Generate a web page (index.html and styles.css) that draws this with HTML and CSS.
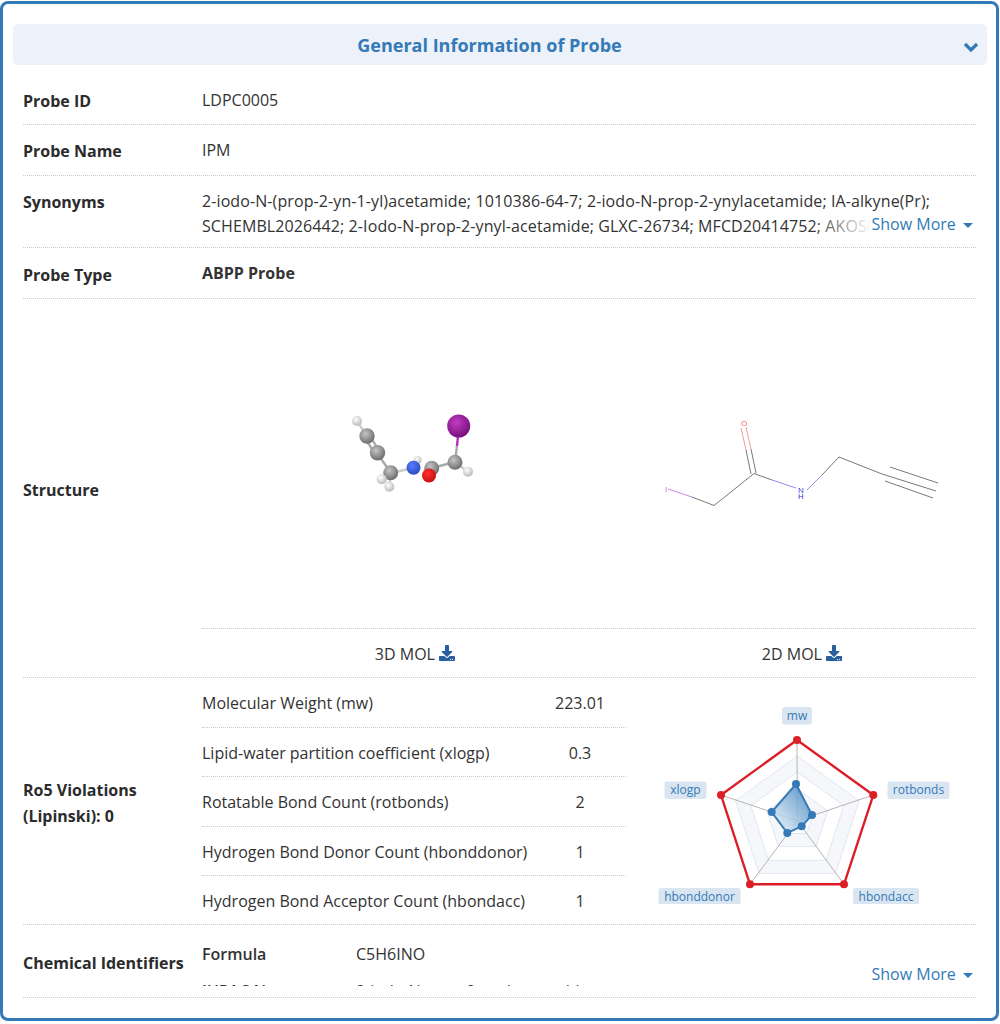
FILE: index.html
```html
<!DOCTYPE html>
<html>
<head>
<meta charset="utf-8">
<title>General Information of Probe</title>
<link rel="stylesheet" href="styles.css">
</head>
<body>
    <div class="panel">
        <div class="panel-title">
            <h2>General Information of Probe</h2>
            <svg class="chevron" width="16" height="12" viewBox="0 0 16 12"><path d="M2 3l6 6 6-6" fill="none" stroke="#337ab7" stroke-width="3.2"/></svg>
        </div>
        <div class="info">
            <div class="row row-id">
                <div class="label">Probe ID</div>
                <div class="value">LDPC0005</div>
            </div>
            <div class="row">
                <div class="label">Probe Name</div>
                <div class="value">IPM</div>
            </div>
            <div class="row row-syn">
                <div class="label">Synonyms</div>
                <div class="value clamp">
                    2-iodo-N-(prop-2-yn-1-yl)acetamide; 1010386-64-7; 2-iodo-N-prop-2-ynylacetamide; IA-alkyne(Pr); SCHEMBL2026442; 2-Iodo-N-prop-2-ynyl-acetamide; GLXC-26734; MFCD20414752; AKOS017343225; CS-0153426
                    <div class="more more-fade">Show More <span class="caret"></span></div>
                </div>
            </div>
            <div class="row row-type">
                <div class="label">Probe Type</div>
                <div class="value strong">ABPP Probe</div>
            </div>
            <div class="row row-structure">
                <div class="label">Structure</div>
                <div class="structure">
                    <div class="mol-images">
                        <svg class="mol-3d" width="426" height="329" viewBox="202 299 426 329">
                            <defs>
                                <radialGradient id="gray" cx="40%" cy="35%" r="65%"><stop offset="0" stop-color="#c4c4c4"/><stop offset="1" stop-color="#6e6e6e"/></radialGradient>
                                <radialGradient id="white" cx="40%" cy="35%" r="65%"><stop offset="0" stop-color="#fff"/><stop offset="1" stop-color="#bbb"/></radialGradient>
                                <radialGradient id="purple" cx="40%" cy="35%" r="65%"><stop offset="0" stop-color="#c23cc2"/><stop offset="1" stop-color="#78107f"/></radialGradient>
                                <radialGradient id="blue" cx="40%" cy="35%" r="65%"><stop offset="0" stop-color="#5b7dff"/><stop offset="1" stop-color="#2a4bc0"/></radialGradient>
                                <radialGradient id="red" cx="40%" cy="35%" r="65%"><stop offset="0" stop-color="#ff3030"/><stop offset="1" stop-color="#c80f0f"/></radialGradient>
                            </defs>
                            <g stroke-width="2.4" fill="none">
                                <path d="M357 421L367 436M391 473L382 479M391 473L389 487M391 473L413 468M455 462L468 472" stroke="#ccc"/>
                                <path d="M365 438L375 454M369 434L379 451M377 453L391 473" stroke="#aaa"/>
                                <path d="M459 426L457 446" stroke="#c02ac0"/>
                                <path d="M457 446L455 462M455 462L432 468" stroke="#aaa"/>
                            </g>
                            <circle cx="357" cy="421" r="5" fill="url(#white)"/>
                            <circle cx="367" cy="436" r="7.7" fill="url(#gray)"/>
                            <circle cx="377.500" cy="452.700" r="7.700" fill="url(#gray)"/>
                            <circle cx="417.500" cy="460" r="4" fill="url(#white)"/>
                            <circle cx="390.700" cy="472.700" r="7.500" fill="url(#gray)"/>
                            <circle cx="381.700" cy="479.300" r="5" fill="url(#white)"/>
                            <circle cx="389.300" cy="486.700" r="5" fill="url(#white)"/>
                            <circle cx="413.500" cy="467.700" r="7" fill="url(#blue)"/>
                            <circle cx="431.700" cy="468.300" r="7.500" fill="url(#gray)"/>
                            <circle cx="429" cy="475.500" r="7" fill="url(#red)"/>
                            <circle cx="455" cy="462.300" r="7.500" fill="url(#gray)"/>
                            <circle cx="468" cy="471.700" r="5" fill="url(#white)"/>
                            <circle cx="458.700" cy="426" r="11.500" fill="url(#purple)"/>
                        </svg>
                        <svg class="mol-2d" width="348" height="329" viewBox="628 299 348 329">
                            <g fill="none" stroke-width="1">
                                <path d="M668 489L692 497" stroke="#c88be8"/>
                                <path d="M692 497L714 505.500L754 473.500" stroke="#777"/>
                                <path d="M754 473.500L772 480" stroke="#777"/>
                                <path d="M772 480L796 488M807 490L822 475" stroke="#8f8ff5"/>
                                <path d="M822 475L839 457L882 474M882 474L936 491M890 467L938 483M885 481L933 498" stroke="#777"/>
                                <path d="M751 474L746 450M756 473L751 449" stroke="#777"/>
                                <path d="M746 450L741 428M751 449L746 427" stroke="#f79a9a"/>
                            </g>
                            <text class="atom" x="744" y="426" fill="#f25555">O</text>
                            <text class="atom" x="801" y="493" fill="#2424e0">N</text>
                            <text class="atom" x="801" y="498.700" fill="#2424e0">H</text>
                            <text class="atom" x="666" y="492" fill="#b45ce0">I</text>
                        </svg>
                    </div>
                    <div class="mol-links">
                        <div class="mol-link">3D MOL <svg class="dl" width="16" height="16" viewBox="0 0 512 512"><path fill="#2a5f9e" d="M216 0h80c13.300 0 24 10.700 24 24v168h87.700c17.800 0 26.700 21.500 14.100 34.100L269.700 378.300c-7.500 7.500-19.800 7.500-27.300 0L90.100 226.100c-12.600-12.600-3.700-34.100 14.100-34.100H192V24c0-13.300 10.700-24 24-24zm296 376v112c0 13.300-10.700 24-24 24H24c-13.300 0-24-10.700-24-24V376c0-13.300 10.700-24 24-24h146.700l49 49c20.100 20.100 52.500 20.100 72.600 0l49-49H488c13.300 0 24 10.700 24 24zm-124 88c0-11-9-20-20-20s-20 9-20 20 9 20 20 20 20-9 20-20zm64 0c0-11-9-20-20-20s-20 9-20 20 9 20 20 20 20-9 20-20z"/></svg></div>
                        <div class="mol-link mol-link-2d">2D MOL <svg class="dl" width="16" height="16" viewBox="0 0 512 512"><path fill="#2a5f9e" d="M216 0h80c13.300 0 24 10.700 24 24v168h87.700c17.800 0 26.700 21.500 14.100 34.100L269.700 378.300c-7.500 7.500-19.800 7.500-27.300 0L90.100 226.100c-12.600-12.600-3.700-34.100 14.100-34.100H192V24c0-13.300 10.700-24 24-24zm296 376v112c0 13.300-10.700 24-24 24H24c-13.300 0-24-10.700-24-24V376c0-13.300 10.700-24 24-24h146.700l49 49c20.100 20.100 52.500 20.100 72.600 0l49-49H488c13.300 0 24 10.700 24 24zm-124 88c0-11-9-20-20-20s-20 9-20 20 9 20 20 20 20-9 20-20zm64 0c0-11-9-20-20-20s-20 9-20 20 9 20 20 20 20-9 20-20z"/></svg></div>
                    </div>
                </div>
            </div>
            <div class="row row-ro5">
                <div class="label">Ro5 Violations<br>(Lipinski): 0</div>
                <div class="ro5">
                    <div class="ro5-table">
                        <div class="ro5-row"><span>Molecular Weight (mw)</span><span class="num">223.01</span></div>
                        <div class="ro5-row"><span>Lipid-water partition coefficient (xlogp)</span><span class="num">0.3</span></div>
                        <div class="ro5-row"><span>Rotatable Bond Count (rotbonds)</span><span class="num">2</span></div>
                        <div class="ro5-row"><span>Hydrogen Bond Donor Count (hbonddonor)</span><span class="num">1</span></div>
                        <div class="ro5-row"><span>Hydrogen Bond Acceptor Count (hbondacc)</span><span class="num">1</span></div>
                    </div>
                    <svg class="radar" width="350" height="225" viewBox="626 679 350 225">
                        <defs>
                            <linearGradient id="radarFill" x1="0" y1="0.800" x2="0.700" y2="0.100"><stop offset="0" stop-color="#e3edf6"/><stop offset="1" stop-color="#5a95c8"/></linearGradient>
                        </defs>
                        <path fill="#f5f7fb" fill-rule="evenodd" d="M797.300 756L859.100 800.700L835.500 873.300L759.100 873.300L735.500 800.700ZM797.300 772L843.900 805.600L826.100 860.300L768.500 860.300L750.700 805.600Z"/>
                        <path fill="#f5f7fb" fill-rule="evenodd" d="M797.300 789L827.700 810.800L816.100 846.600L778.500 846.600L766.900 810.800ZM797.300 805L812.500 815.800L806.700 833.500L787.900 833.500L782.100 815.800Z"/>
                        <g fill="none" stroke="#e0e6f1" stroke-width="1">
                            <path d="M797.300 756L859.100 800.700L835.500 873.300L759.100 873.300L735.500 800.700Z"/>
                            <path d="M797.300 772L843.900 805.600L826.100 860.300L768.500 860.300L750.700 805.600Z"/>
                            <path d="M797.300 789L827.700 810.800L816.100 846.600L778.500 846.600L766.900 810.800Z"/>
                            <path d="M797.300 805L812.500 815.800L806.700 833.500L787.900 833.500L782.100 815.800Z"/>
                        </g>
                        <path d="M797.300 820.700L797 740M797.300 820.700L873.300 795M797.300 820.700L844 884.300M797.300 820.700L750 884.300M797.300 820.700L721 795" stroke="#b4b4b4" stroke-width="1" fill="none"/>
                        <path d="M797 740L873.300 795L844 884.300L750 884.300L721 795Z" fill="none" stroke="#dc1e26" stroke-width="2.400"/>
                        <g fill="#dc1e26">
                            <circle cx="797" cy="740" r="4"/><circle cx="873.300" cy="795" r="4"/><circle cx="844" cy="884.300" r="4"/><circle cx="750" cy="884.300" r="4"/><circle cx="721" cy="795" r="4"/>
                        </g>
                        <path d="M796 784L812 815L801.700 826.300L787.300 833L771.700 812Z" fill="url(#radarFill)" fill-opacity="0.850" stroke="#337ab7" stroke-width="2"/>
                        <g fill="#337ab7">
                            <circle cx="796" cy="784" r="4"/><circle cx="812" cy="815" r="4"/><circle cx="801.700" cy="826.300" r="4"/><circle cx="787.300" cy="833" r="4"/><circle cx="771.700" cy="812" r="4"/>
                        </g>
                        <g fill="#d9e5f1">
                            <rect x="782" y="707" width="30" height="17.500" rx="2.500"/>
                            <rect x="664.500" y="781.500" width="42" height="17.500" rx="2.500"/>
                            <rect x="887.500" y="781.500" width="62" height="17.500" rx="2.500"/>
                            <rect x="658.500" y="888" width="82" height="17.500" rx="2.500"/>
                            <rect x="853" y="888" width="66" height="17.500" rx="2.500"/>
                        </g>
                        <g class="radar-text" text-anchor="middle" fill="#337ab7">
                            <text x="797" y="720">mw</text>
                            <text x="685.500" y="794">xlogp</text>
                            <text x="918.500" y="794">rotbonds</text>
                            <text x="699.500" y="900.500">hbonddonor</text>
                            <text x="886" y="900.500">hbondacc</text>
                        </g>
                    </svg>
                </div>
            </div>
            <div class="row row-ids">
                <div class="label">Chemical Identifiers</div>
                <div class="ids">
                    <div class="ids-row"><span class="ids-key">Formula</span><span>C5H6INO</span></div>
                    <div class="ids-row"><span class="ids-key">IUPAC Name</span><span>2-iodo-N-prop-2-ynylacetamide</span></div>
                    <div class="ids-row"><span class="ids-key">Canonical SMILES</span><span>C#CCNC(=O)CI</span></div>
                </div>
                <div class="more">Show More <span class="caret"></span></div>
            </div>
        </div>
    </div>
</body>
</html>
```

FILE: styles.css
```css
body {
    margin: 0;
    font-family: "Open Sans", "Noto Sans", sans-serif;
    font-size: 16px;
    color: #333;
    background-color: #fff;
}

.panel {
    box-sizing: border-box;
    width: 999px;
    height: 1020px;
    margin-top: 1px;
    padding: 20px 9px 0 10px;
    border: 3px solid #337ab7;
    border-radius: 8px;
}

.panel-title {
    position: relative;
    height: 41px;
    background-color: #edf1f9;
    border-radius: 5px;
    text-align: center;
}

.panel-title h2 {
    margin: 0;
    padding-right: 21px;
    font-size: 18px;
    font-weight: 700;
    line-height: 42px;
    color: #337ab7;
}

.chevron {
    position: absolute;
    right: 8px;
    top: 17px;
}

.info {
    margin: 11px 11px 0 10px;
}

.row {
    position: relative;
    display: flex;
    box-sizing: border-box;
    height: 51px;
    padding-top: 13px;
    border-bottom: 1px dotted #ccc;
    line-height: 24px;
}

.row-id {
    height: 49px;
    padding-top: 12px;
}

.row-syn {
    height: 72px;
}

.label {
    flex: 0 0 179px;
    font-weight: 700;
    color: #2b2b2b;
    padding-top: 1px;
}

.row-type .label {
    padding-top: 2px;
}

.value {
    flex: 1;
}

.strong {
    font-weight: 700;
}

.clamp {
    position: relative;
    height: 49px;
    overflow: hidden;
    line-height: 24.5px;
    letter-spacing: 0.1px;
}

.more {
    position: absolute;
    right: 3px;
    bottom: 11px;
    color: #337ab7;
    line-height: 24px;
    letter-spacing: 0;
    background-color: #fff;
}

.more-fade {
    bottom: 2px;
    padding-left: 60px;
    background: linear-gradient(to right, rgba(255, 255, 255, 0), #fff 60px);
}

.caret {
    display: inline-block;
    margin-left: 3px;
    vertical-align: middle;
    border-top: 5px solid #337ab7;
    border-left: 5px solid transparent;
    border-right: 5px solid transparent;
}

.row-structure {
    height: 379px;
    padding-top: 0;
    align-items: center;
}

.row-structure .label {
    padding-top: 3px;
}

.structure {
    flex: 1;
}

.mol-images {
    display: flex;
    height: 329px;
    border-bottom: 1px dotted #ccc;
}

.mol-images svg {
    display: block;
    filter: blur(0.3px);
}

.atom {
    font-size: 8px;
    text-anchor: middle;
}

.mol-links {
    display: flex;
    height: 49px;
    line-height: 50px;
    text-align: center;
    color: #333;
}

.mol-link {
    flex: 0 0 426px;
}

.mol-link-2d {
    flex: 0 0 348px;
}

.dl {
    vertical-align: -1px;
}

.row-ro5 {
    height: 247px;
    padding-top: 0;
    align-items: center;
}

.row-ro5 .label {
    padding-top: 3px;
    line-height: 26px;
}

.ro5 {
    flex: 1;
    display: flex;
    align-self: flex-start;
}

.ro5-table {
    flex: 0 0 424px;
}

.ro5-row {
    display: flex;
    justify-content: space-between;
    height: 49.500px;
    line-height: 50px;
    box-sizing: border-box;
    border-bottom: 1px dotted #ccc;
}

.ro5-row:last-child {
    border-bottom: none;
}

.num {
    flex: 0 0 92px;
    text-align: center;
}

.radar {
    display: block;
    margin-top: 1px;
}

.radar-text {
    font-size: 12px;
}

.row-ids {
    height: 73px;
    padding-top: 0;
    align-items: center;
}

.row-ids .label {
    padding-top: 3px;
}

.ids {
    flex: 1;
    height: 61px;
    align-self: flex-start;
    overflow: hidden;
}

.ids-row {
    display: flex;
    height: 37px;
    padding-top: 17px;
    margin-bottom: -17px;
}

.ids-key {
    flex: 0 0 154px;
    font-weight: 600;
}
```
